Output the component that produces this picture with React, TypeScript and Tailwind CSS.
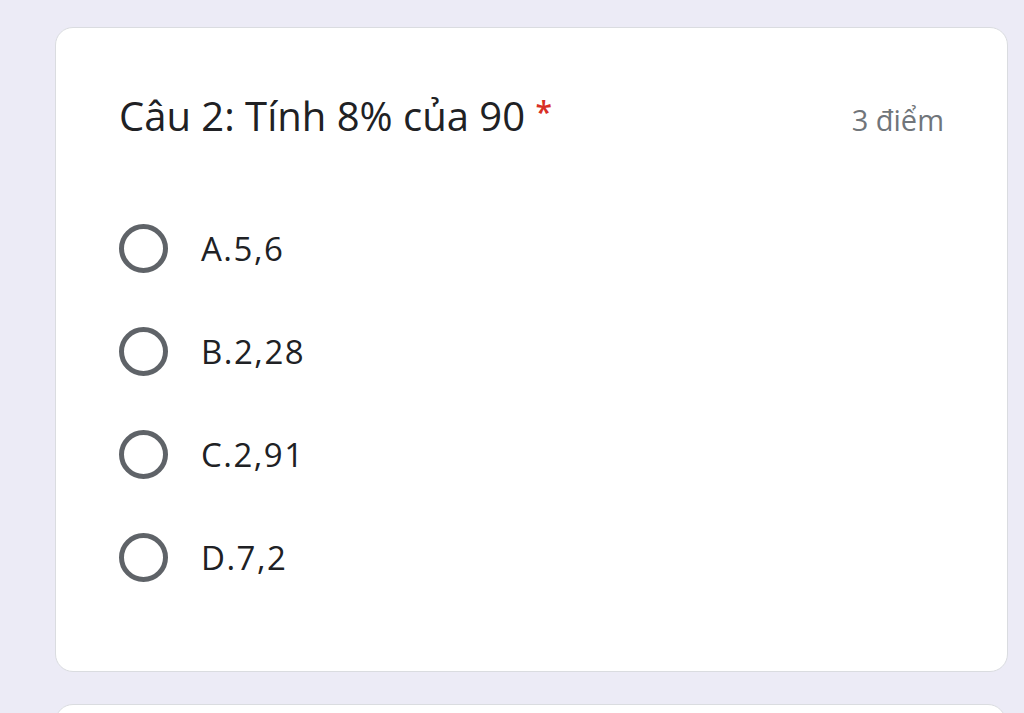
const options = ["A.5,6", "B.2,28", "C.2,91", "D.7,2"];

function Radio() {
  return <span className="block h-[49px] w-[49px] shrink-0 rounded-full border-[5px] border-[#5f6368]" />;
}

export default function App() {
  return (
    <div className="min-h-screen bg-[#ecebf6] pt-[27px] pl-[55px] pr-[16px] font-['Open_Sans',sans-serif]">
      <div className="h-[645px] w-[953px] rounded-[18px] border border-[#dadce0] bg-white pl-[63px] pr-[63px] pt-[66px]">
        <div className="flex items-baseline justify-between">
          <h2 className="text-[40px] leading-[44px] text-[#202124]">
            Câu 2: Tính 8% của 90{" "}
            <span className="relative top-[-8px] text-[30px] font-semibold text-[#d93025]">*</span>
          </h2>
          <span className="text-[29px] text-[#70757a]">3 điểm</span>
        </div>
        <div className="mt-[82px] flex flex-col gap-[54px]">
          {options.map((o) => (
            <label key={o} className="flex items-center gap-[33px]">
              <Radio />
              <span className="text-[33px] leading-[49px] tracking-[1.5px] text-[#202124]">{o}</span>
            </label>
          ))}
        </div>
      </div>
      <div className="mt-[32px] h-[40px] w-[951px] rounded-t-[18px] border border-[#dadce0] bg-white" />
    </div>
  );
}
